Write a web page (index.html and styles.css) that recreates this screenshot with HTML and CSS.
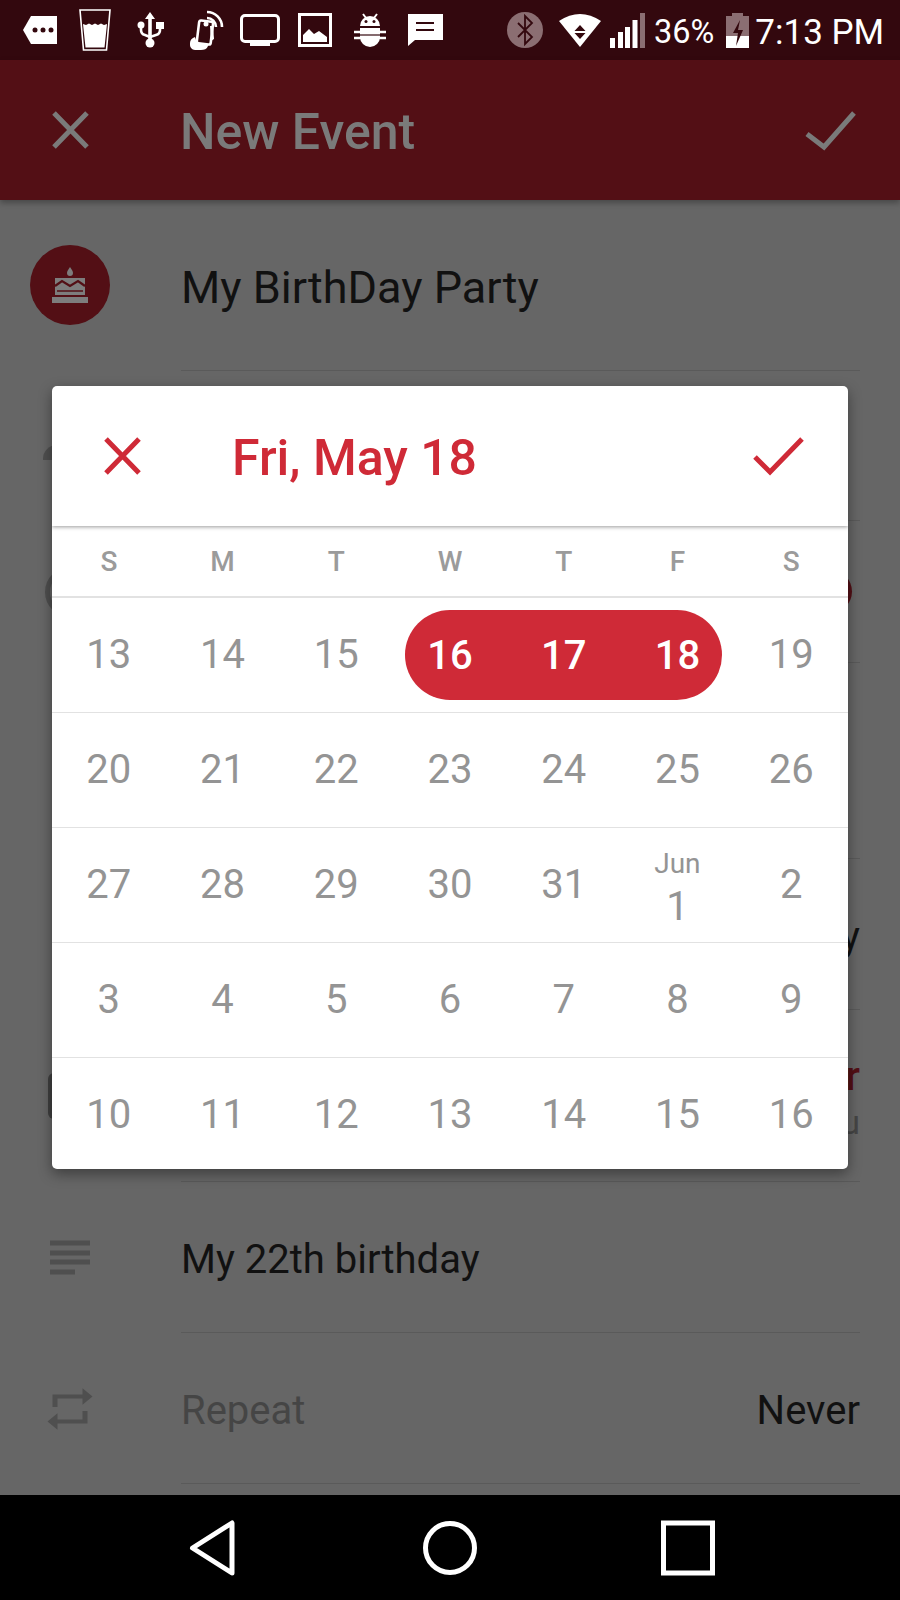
FILE: index.html
```html
<!DOCTYPE html>
<html lang="en">
<head>
<meta charset="UTF-8" />
<title>New Event</title>
<link rel="stylesheet" href="styles.css">
</head>
<body>
  <div class="screen">
    <!-- Status bar -->
    <div class="status-bar">
      <div class="status-left">
        <svg class="si" viewBox="0 0 44 44"><path d="M5 22 13 8H39V36H13Z" fill="#fff"/><circle cx="17" cy="22" r="2.5" fill="#33080e"/><circle cx="25" cy="22" r="2.5" fill="#33080e"/><circle cx="33" cy="22" r="2.5" fill="#33080e"/></svg>
        <svg class="si" viewBox="0 0 44 44"><path d="M7 2H37L33.5 42H10.5Z" fill="none" stroke="#fff" stroke-width="1.6"/><path d="M10 16l3 1 3-1.5 3 1.5 3-1.5 3 1.5 3-1.5 3 1.5 3-1L31.5 39.5H12.5Z" fill="#fff"/></svg>
        <svg class="si" viewBox="0 0 44 44"><path d="M22 4l5 7h-3.200v20h-3.600V11H17Z" fill="#fff"/><circle cx="22" cy="35" r="4.500" fill="#fff"/><circle cx="13" cy="17" r="3.500" fill="#fff"/><rect x="28" y="14" width="8" height="7" fill="#fff"/><path d="M13 18v4q0 4 4 5l5 2M32 20v2q0 4-4 5l-6 2" fill="none" stroke="#fff" stroke-width="2.600"/></svg>
        <svg class="si" viewBox="0 0 44 44"><path d="M24 4A15 15 0 0 1 39 19M24 10A9 9 0 0 1 33 19" fill="none" stroke="#fff" stroke-width="2.600"/><rect x="15" y="13" width="14" height="23" rx="2" transform="rotate(7 22 24)" fill="none" stroke="#fff" stroke-width="2.600"/><circle cx="23" cy="16" r="2.500" fill="#fff"/><path d="M7 35c0-3 2-5 5-6l2 6 12 1-1 2c-1 3-4 4-7 4h-6c-3 0-5-3-5-5Z" fill="#fff"/><path d="M27 18h3l1 13-3 2Z" fill="#fff"/></svg>
        <svg class="si" viewBox="0 0 44 44"><rect x="3.500" y="7.500" width="37" height="26" rx="3.500" fill="none" stroke="#fff" stroke-width="3"/><rect x="12" y="33" width="20" height="5" fill="#fff"/></svg>
        <svg class="si" viewBox="0 0 44 44"><rect x="6.500" y="6.500" width="31" height="31" fill="none" stroke="#fff" stroke-width="3"/><path d="M10 34V27l6-6 5 5 5-3 8 6v5Z" fill="#fff"/></svg>
        <svg class="si" viewBox="0 0 44 44"><path d="M12 18a10 10 0 0 1 20 0Z" fill="#fff"/><path d="M15 6l3 4M29 6l-3 4" stroke="#fff" stroke-width="2"/><circle cx="18" cy="13.500" r="1.500" fill="#33080e"/><circle cx="26" cy="13.500" r="1.500" fill="#33080e"/><path d="M12 20H32V29a10 10 0 0 1-20 0Z" fill="#fff"/><path d="M6 24H38M6 30H38" stroke="#fff" stroke-width="2.400"/><path d="M12 27H32" stroke="#33080e" stroke-width="1.200"/></svg>
        <svg class="si" viewBox="0 0 44 44"><path d="M5 6H40V32H12L5 38Z" fill="#fff"/><path d="M13 15H31M13 22H31" stroke="#33080e" stroke-width="2.200"/></svg>
      </div>
      <svg class="bt" viewBox="0 0 36 36"><circle cx="18" cy="18" r="18" fill="#8b6e72"/><path d="M11 11 25 25 18 32V4L25 11 11 25" fill="none" stroke="#33080e" stroke-width="1.800"/></svg>
      <svg class="wifi" viewBox="0 0 42 33"><path d="M0 7Q21-7 42 7L21 33Z" fill="#fff"/><path d="M15.500 17 21 11l5.500 6ZM15.500 19h11L21 25Z" fill="#33080e"/></svg>
      <svg class="signal" viewBox="0 0 35 35"><rect x="0" y="25" width="5" height="10" fill="#fff"/><rect x="8" y="19" width="5" height="16" fill="#fff"/><rect x="15" y="14" width="5" height="21" fill="#fff"/><rect x="22.500" y="7" width="5" height="28" fill="#fff"/><rect x="30" y="0" width="5" height="35" fill="#8b6e72"/></svg>
      <span class="battery-text">36%</span>
      <svg class="battery" viewBox="0 0 23 35"><path d="M6 0H17V3H23V23H0V3H6Z" fill="#8b6e72"/><path d="M0 23H23V35H0Z" fill="#fff"/><path d="M14 7 7 20h5l-2 13 7-16h-5Z" fill="#33080e"/></svg>
      <span class="clock">7:13 PM</span>
    </div>

    <!-- App bar -->
    <div class="app-bar">
      <svg class="bar-close" viewBox="0 0 44 44"><path d="M6 5 39 39M39 5 6 39" fill="none" stroke="#7a7a7a" stroke-width="5"/></svg>
      <h1 class="bar-title">New Event</h1>
      <svg class="bar-check" viewBox="0 0 56 44"><path d="M5 26 22 39 52 5" fill="none" stroke="#7a7a7a" stroke-width="5"/></svg>
    </div>

    <!-- Form behind the dialog -->
    <div class="form">
      <div class="row row-title">
        <div class="row-icon">
          <div class="cake-badge">
            <svg width="40" height="40" viewBox="0 0 40 40"><path d="M20 2c2 3 3 4 3 6a3 3 0 0 1-6 0c0-2 1-3 3-6Z" fill="#7d7d7d"/><path d="M5 13H35V30H5Z" fill="#7d7d7d"/><path d="M5 21l7-5 8 5 8-5 7 5" fill="none" stroke="#530f15" stroke-width="2.200"/><path d="M7 26H33" stroke="#530f15" stroke-width="1.500"/><rect x="2" y="32" width="36" height="6" fill="#7d7d7d"/></svg>
          </div>
        </div>
        <div class="row-body"><span class="value value-big">My BirthDay Party</span></div>
      </div>
      <div class="row row-guests">
        <div class="row-icon"><div class="blob-icon"></div></div>
        <div class="row-body"></div>
      </div>
      <div class="row row-allday">
        <div class="row-icon"><div class="clock-icon"></div></div>
        <div class="row-body"><div class="switch-knob"></div></div>
      </div>
      <div class="row row-ends">
        <div class="row-icon"></div>
        <div class="row-body"></div>
      </div>
      <div class="row row-date">
        <div class="row-icon"></div>
        <div class="row-body"><span class="value row-end">Friday</span></div>
      </div>
      <div class="row row-calendar">
        <div class="row-icon"><div class="calendar-icon"></div></div>
        <div class="row-body">
          <div class="calendar-pick row-end"><span class="calendar-name">Calendar</span><span class="calendar-user">Thu</span></div>
        </div>
      </div>
      <div class="row row-note">
        <div class="row-icon">
          <svg width="40" height="36" viewBox="0 0 40 36"><path d="M0 3H40M0 13H40M0 22H40M0 32H25" stroke="#4f4f4f" stroke-width="5"/></svg>
        </div>
        <div class="row-body"><span class="value">My 22th birthday</span></div>
      </div>
      <div class="row row-repeat">
        <div class="row-icon">
          <svg width="60" height="50" viewBox="0 0 24 24" preserveAspectRatio="none"><path d="M7 7h10v3l4-4-4-4v3H5v6h2V7zm10 10H7v-3l-4 4 4 4v-3h12v-6h-2v4z" fill="#4f4f4f"/></svg>
        </div>
        <div class="row-body"><span class="label">Repeat</span><span class="value row-end">Never</span></div>
      </div>
    </div>

    <!-- Navigation bar -->
    <div class="nav-bar">
      <svg class="nav-icon" viewBox="0 0 54 56"><path d="M7.500 28 47 3V53Z" fill="none" stroke="#fff" stroke-width="5" stroke-linejoin="round"/></svg>
      <svg class="nav-icon" viewBox="0 0 54 56"><circle cx="27" cy="28" r="24.500" fill="none" stroke="#fff" stroke-width="5"/></svg>
      <svg class="nav-icon" viewBox="0 0 54 56"><rect x="2.500" y="3" width="49" height="50" fill="none" stroke="#fff" stroke-width="5"/></svg>
    </div>

    <!-- Date picker dialog -->
    <div class="dialog" role="dialog" aria-label="Pick dates">
      <div class="dialog-head">
        <svg class="dialog-close" viewBox="0 0 44 44"><path d="M6 5 39 39M39 5 6 39" fill="none" stroke="#cf2a37" stroke-width="5"/></svg>
        <h2 class="dialog-title">Fri, May 18</h2>
        <svg class="dialog-check" viewBox="0 0 56 44"><path d="M5 23 20 38 52 5" fill="none" stroke="#cf2a37" stroke-width="5"/></svg>
      </div>
      <div class="weekdays">
        <span>S</span><span>M</span><span>T</span><span>W</span><span>T</span><span>F</span><span>S</span>
      </div>
      <div class="week">
        <div class="day">13</div><div class="day">14</div><div class="day">15</div>
        <div class="day picked picked-start">16</div><div class="day picked">17</div><div class="day picked picked-end">18</div>
        <div class="day">19</div>
      </div>
      <div class="week">
        <div class="day">20</div><div class="day">21</div><div class="day">22</div><div class="day">23</div><div class="day">24</div><div class="day">25</div><div class="day">26</div>
      </div>
      <div class="week">
        <div class="day">27</div><div class="day">28</div><div class="day">29</div><div class="day">30</div><div class="day">31</div>
        <div class="day day-month"><small>Jun</small>1</div>
        <div class="day">2</div>
      </div>
      <div class="week">
        <div class="day">3</div><div class="day">4</div><div class="day">5</div><div class="day">6</div><div class="day">7</div><div class="day">8</div><div class="day">9</div>
      </div>
      <div class="week week-last">
        <div class="day">10</div><div class="day">11</div><div class="day">12</div><div class="day">13</div><div class="day">14</div><div class="day">15</div><div class="day">16</div>
      </div>
    </div>
  </div>
</body>
</html>
```

FILE: styles.css
```css
/* Reset and base */
* {
  box-sizing: border-box;
}
body {
  margin: 0;
  font-family: Roboto, "Liberation Sans", sans-serif;
  background: #000;
}
h1, h2 {
  margin: 0;
}
svg {
  display: block;
  flex: none;
}
.screen {
  position: relative;
  width: 900px;
  height: 1600px;
  display: flex;
  flex-direction: column;
  overflow: hidden;
  background: #666;
}

/* Status bar */
.status-bar {
  height: 60px;
  flex: none;
  display: flex;
  align-items: center;
  padding-left: 18px;
  background: #33080e;
  color: #fff;
}
.status-left {
  display: flex;
  gap: 11px;
}
.si {
  width: 44px;
  height: 44px;
}
.bt {
  width: 36px;
  height: 36px;
  margin-left: 60px;
}
.wifi {
  width: 42px;
  height: 33px;
  margin-left: 16px;
}
.signal {
  width: 35px;
  height: 35px;
  margin-left: 9px;
}
.battery-text {
  font-size: 32.5px;
  margin-left: 9px;
  padding-top: 4px;
}
.battery {
  width: 23px;
  height: 35px;
  margin-left: 12px;
}
.clock {
  font-size: 35px;
  margin-left: 6px;
  padding-top: 4px;
  white-space: nowrap;
}

/* App bar */
.app-bar {
  position: relative;
  height: 140px;
  flex: none;
  display: flex;
  align-items: center;
  padding: 0 42px 0 48px;
  background: #530f15;
  box-shadow: 0 3px 6px rgba(0,0,0,0.3);
}
.bar-close {
  width: 44px;
  height: 44px;
}
.bar-title {
  margin-left: 88px;
  padding-top: 4px;
  font-size: 50px;
  font-weight: 500;
  color: #7a7a7a;
}
.bar-check {
  width: 56px;
  height: 44px;
  margin-left: auto;
}

/* Form rows */
.form {
  flex: 1;
  min-height: 0;
  overflow: hidden;
}
.row {
  display: flex;
}
.row-title { height: 171px; }
.row-guests { height: 150px; }
.row-allday { height: 142px; }
.row-ends { height: 196px; }
.row-date { height: 151px; }
.row-calendar { height: 172px; }
.row-note { height: 151px; }
.row-repeat { height: 151px; }
.row-icon {
  width: 140px;
  flex: none;
  display: flex;
  align-items: center;
  justify-content: center;
}
.row-body {
  flex: 1;
  display: flex;
  align-items: center;
  justify-content: space-between;
  margin: 0 40px 0 41px;
  padding-top: 4px;
  border-bottom: 1px solid #5a5a5a;
}
.row-end {
  margin-left: auto;
}
.value {
  font-size: 40px;
  color: #111;
}
.value-big {
  font-size: 45px;
}
.label {
  font-size: 40px;
  color: #454545;
}
.cake-badge {
  width: 80px;
  height: 80px;
  margin-top: -2px;
  display: flex;
  align-items: center;
  justify-content: center;
  border-radius: 50%;
  background: #530f15;
}
.blob-icon {
  width: 54px;
  height: 15px;
  margin-top: 13px;
  border-radius: 14px 14px 0 0;
  background: #4f4f4f;
}
.clock-icon {
  width: 50px;
  height: 50px;
  border: 5px solid #4f4f4f;
  border-radius: 50%;
}
.switch-knob {
  width: 43px;
  height: 43px;
  margin: -4px 8px 0 auto;
  border-radius: 50%;
  background: #530f15;
}
.calendar-icon {
  width: 44px;
  height: 46px;
  border-radius: 6px;
  background: #3f3f3f;
}
.calendar-pick {
  display: flex;
  flex-direction: column;
  align-items: flex-end;
  gap: 4px;
}
.calendar-name {
  font-size: 40px;
  font-weight: 500;
  line-height: 44px;
  color: #530f15;
}
.calendar-user {
  font-size: 34px;
  line-height: 38px;
  color: #454545;
}

/* Navigation bar */
.nav-bar {
  height: 105px;
  flex: none;
  display: flex;
  align-items: center;
  justify-content: center;
  gap: 184px;
  background: #000;
}
.nav-icon {
  width: 54px;
  height: 56px;
}

/* Date picker dialog */
.dialog {
  position: absolute;
  left: 52px;
  top: 386px;
  width: 796px;
  height: 783px;
  border-radius: 5px;
  background: #fff;
  box-shadow: 0 5px 14px rgba(0,0,0,0.4);
  overflow: hidden;
}
.dialog-head {
  position: relative;
  height: 140px;
  display: flex;
  align-items: center;
  padding: 0 42px 0 48px;
  box-shadow: 0 1px 4px rgba(0,0,0,0.4);
}
.dialog-close {
  width: 44px;
  height: 44px;
}
.dialog-title {
  margin-left: 88px;
  padding-top: 4px;
  font-size: 50px;
  font-weight: 500;
  color: #cf2a37;
}
.dialog-check {
  width: 56px;
  height: 44px;
  margin-left: auto;
}
.weekdays {
  height: 72px;
  display: grid;
  grid-template-columns: repeat(7, 1fr);
  align-items: center;
  text-align: center;
  font-size: 28px;
  font-weight: 500;
  color: #9b9b9b;
  border-bottom: 2px solid #e2e2e2;
}
.week {
  height: 115px;
  display: grid;
  grid-template-columns: repeat(7, 1fr);
  align-items: center;
  border-bottom: 1px solid #e2e2e2;
}
.week-last {
  border-bottom: none;
}
.day {
  height: 90px;
  display: flex;
  flex-direction: column;
  align-items: center;
  justify-content: center;
  padding-bottom: 2px;
  font-size: 40px;
  color: #949494;
}
.day small {
  font-size: 28px;
  line-height: 33px;
  margin-bottom: 3px;
}
.day-month {
  line-height: 47px;
  padding-top: 8px;
}
.picked {
  padding-bottom: 0;
  background: #cf2a37;
  color: #fff;
  font-weight: 500;
}
.picked-start {
  margin-left: 12px;
  padding-right: 12px;
  border-radius: 45px 0 0 45px;
}
.picked-end {
  margin-right: 12px;
  padding-left: 12px;
  border-radius: 0 45px 45px 0;
}
```
